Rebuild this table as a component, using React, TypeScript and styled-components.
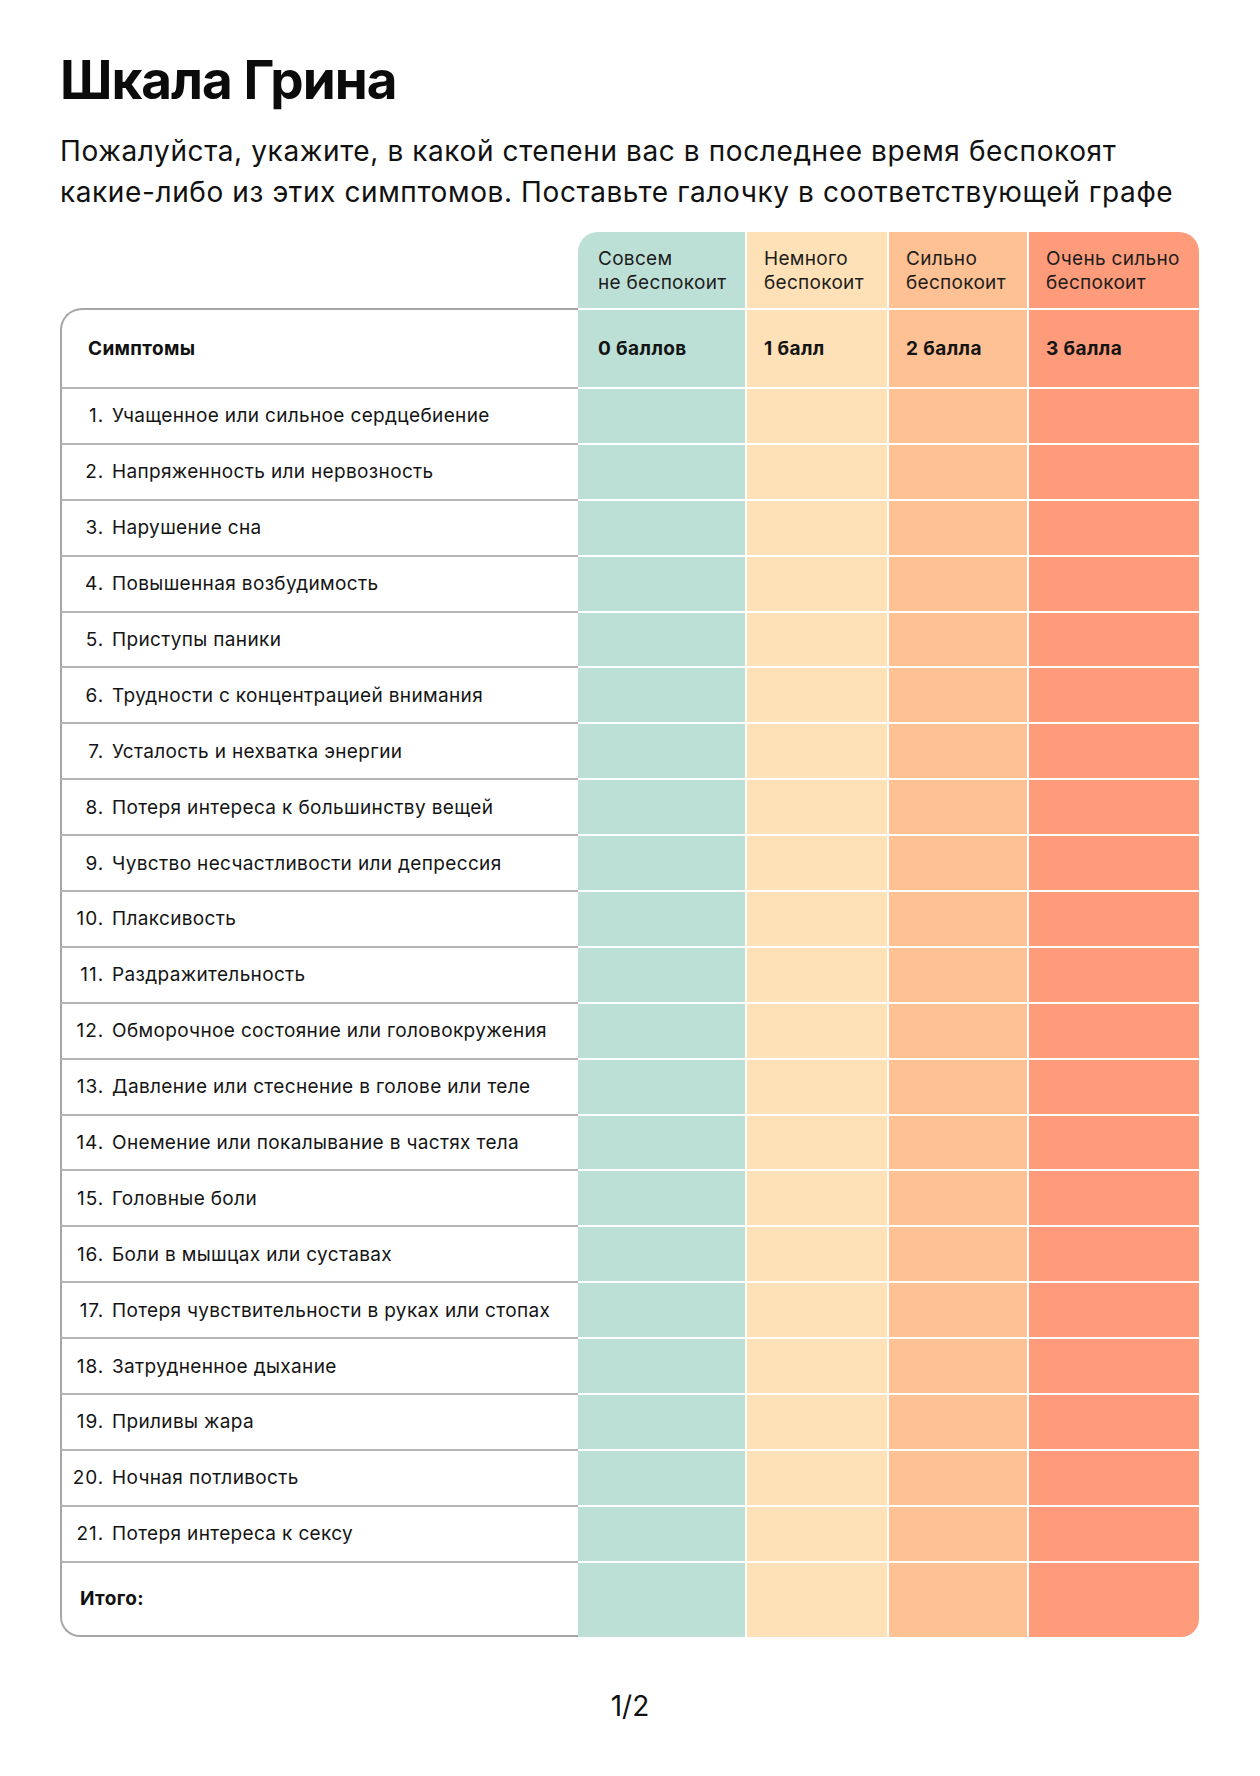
import React from "react";
import styled, { createGlobalStyle } from "styled-components";

const GlobalStyle = createGlobalStyle`
  html, body {
    margin: 0;
    padding: 0;
    background: #ffffff;
  }
  body {
    font-family: Inter, "Noto Sans", "Liberation Sans", sans-serif;
    color: #111111;
  }
`;

const COLORS = ["#BDE0D6", "#FEE1B7", "#FEC193", "#FE9B7A"];
const OUTER_LINE = "#a6a6a6";
const INNER_LINE = "#b5b5b5";

const Page = styled.main`
  width: 1260px;
  min-height: 1776px;
  box-sizing: border-box;
  padding: 52px 60px 0 60px;
  display: flex;
  flex-direction: column;
`;

const Title = styled.h1`
  margin: 0;
  font-size: 53px;
  line-height: 56px;
  font-weight: 700;
  letter-spacing: -1px;
  color: #0b0b0b;
`;

const Subtitle = styled.p`
  margin: 23px 0 0 0;
  font-size: 28px;
  line-height: 41px;
  font-weight: 400;
  color: #111111;
  letter-spacing: 0.6px;
`;

const Table = styled.div`
  margin-top: 19px;
  display: grid;
  grid-template-columns: 518px 167px 142px 140px 172px;
  grid-template-rows: 76px 79px repeat(21, 55.9px) 76px;
  width: 1139px;
`;

const Blank = styled.div``;

const Colored = styled.div<{ $col: number }>`
  box-sizing: border-box;
  background: ${(p) => COLORS[p.$col]};
  border-left: ${(p) => (p.$col === 0 ? "0" : "2px solid #ffffff")};
  padding-left: ${(p) => (p.$col === 0 ? "20px" : "17px")};
  display: flex;
  align-items: center;
  color: #141414;
`;

const HeadCell = styled(Colored)`
  align-items: flex-start;
  padding-top: 15px;
  font-size: 19px;
  line-height: 24px;
  font-weight: 400;
  letter-spacing: 0.3px;
  color: #1c1c1c;
  border-top-left-radius: ${(p) => (p.$col === 0 ? "20px" : "0")};
  border-top-right-radius: ${(p) => (p.$col === 3 ? "20px" : "0")};
`;

const ScoreCell = styled(Colored)`
  border-top: 2px solid #ffffff;
  font-size: 19px;
  font-weight: 700;
  letter-spacing: 0.4px;
`;

const MarkCell = styled(Colored)<{ $last?: boolean }>`
  border-top: 2px solid #ffffff;
  border-bottom-right-radius: ${(p) => (p.$last && p.$col === 3 ? "18px" : "0")};
`;

const SymptomBase = styled.div`
  box-sizing: border-box;
  border-left: 2px solid ${OUTER_LINE};
  display: flex;
  align-items: center;
  background: #ffffff;
`;

const SymptomHead = styled(SymptomBase)`
  border-top: 2px solid ${OUTER_LINE};
  border-top-left-radius: 22px;
  padding-left: 26px;
  font-size: 19px;
  font-weight: 700;
  letter-spacing: 0.35px;
  color: #111111;
`;

const SymptomCell = styled(SymptomBase)`
  border-top: 2px solid ${INNER_LINE};
  font-size: 19px;
  font-weight: 400;
  letter-spacing: 0.35px;
  color: #141414;
`;

const TotalLabel = styled(SymptomBase)`
  border-top: 2px solid ${INNER_LINE};
  border-bottom: 2px solid ${OUTER_LINE};
  border-bottom-left-radius: 20px;
  padding-left: 18px;
  font-size: 19px;
  font-weight: 700;
  letter-spacing: 0.35px;
  color: #111111;
`;

const Num = styled.span`
  display: inline-block;
  width: 42px;
  text-align: right;
  flex: none;
  letter-spacing: 0.9px;
`;

const Label = styled.span`
  margin-left: 8px;
`;

const PageNum = styled.div`
  margin-top: 55px;
  text-align: center;
  font-size: 28px;
  line-height: 28px;
  font-weight: 400;
  color: #111111;
`;

const headers = [
  ["Совсем", "не беспокоит"],
  ["Немного", "беспокоит"],
  ["Сильно", "беспокоит"],
  ["Очень сильно", "беспокоит"],
];

const scores = ["0 баллов", "1 балл", "2 балла", "3 балла"];

const symptoms = [
  "Учащенное или сильное сердцебиение",
  "Напряженность или нервозность",
  "Нарушение сна",
  "Повышенная возбудимость",
  "Приступы паники",
  "Трудности с концентрацией внимания",
  "Усталость и нехватка энергии",
  "Потеря интереса к большинству вещей",
  "Чувство несчастливости или депрессия",
  "Плаксивость",
  "Раздражительность",
  "Обморочное состояние или головокружения",
  "Давление или стеснение в голове или теле",
  "Онемение или покалывание в частях тела",
  "Головные боли",
  "Боли в мышцах или суставах",
  "Потеря чувствительности в руках или стопах",
  "Затрудненное дыхание",
  "Приливы жара",
  "Ночная потливость",
  "Потеря интереса к сексу",
];

export default function App() {
  return (
    <>
      <GlobalStyle />
      <Page>
        <Title>Шкала Грина</Title>
        <Subtitle>
          Пожалуйста, укажите, в какой степени вас в последнее время беспокоят
          <br />
          какие-либо из этих симптомов. Поставьте галочку в соответствующей графе
        </Subtitle>
        <Table>
          <Blank />
          {headers.map((h, i) => (
            <HeadCell key={`h${i}`} $col={i}>
              <span>
                {h[0]}
                <br />
                {h[1]}
              </span>
            </HeadCell>
          ))}

          <SymptomHead>Симптомы</SymptomHead>
          {scores.map((s, i) => (
            <ScoreCell key={`s${i}`} $col={i}>
              {s}
            </ScoreCell>
          ))}

          {symptoms.map((s, r) => (
            <React.Fragment key={`r${r}`}>
              <SymptomCell>
                <Num>{r + 1}.</Num>
                <Label>{s}</Label>
              </SymptomCell>
              {COLORS.map((_, c) => (
                <MarkCell key={`m${r}-${c}`} $col={c} />
              ))}
            </React.Fragment>
          ))}

          <TotalLabel>Итого:</TotalLabel>
          {COLORS.map((_, c) => (
            <MarkCell key={`t${c}`} $col={c} $last />
          ))}
        </Table>
        <PageNum>1/2</PageNum>
      </Page>
    </>
  );
}
